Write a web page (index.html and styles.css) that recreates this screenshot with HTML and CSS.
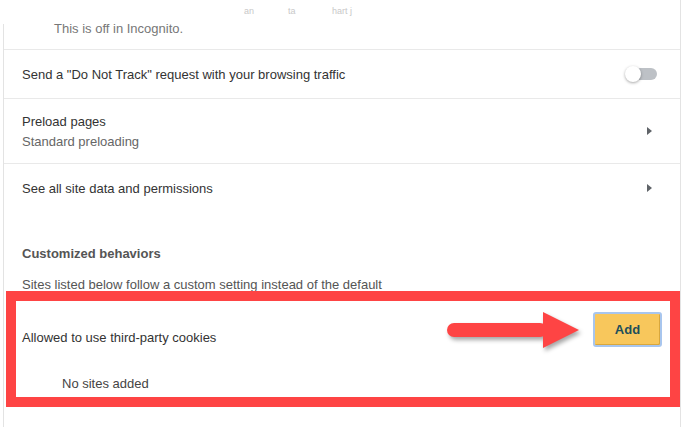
FILE: index.html
```html
<!DOCTYPE html>
<html lang="en">
<head>
    <meta charset="UTF-8">
    <meta name="viewport" content="width=device-width, initial-scale=1.0">
    <title>Cookies and other site data</title>
    <link rel="stylesheet" href="styles.css">
</head>
<body>
    <div class="page">
        <!-- faded remains of the row scrolled out above -->
        <div class="ghost">
            <span class="ghost-a">an</span>
            <span class="ghost-b">ta</span>
            <span class="ghost-c">hart j</span>
        </div>

        <div class="card">
            <div class="row row-note">
                <span class="note">This is off in Incognito.</span>
            </div>

            <div class="row row-line">
                <span class="label">Send a "Do Not Track" request with your browsing traffic</span>
                <span class="toggle"><span class="knob"></span></span>
            </div>

            <div class="row row-line row-tall">
                <div class="stack">
                    <span class="label">Preload pages</span>
                    <span class="sub">Standard preloading</span>
                </div>
                <span class="chevron"></span>
            </div>

            <div class="row row-line">
                <span class="label">See all site data and permissions</span>
                <span class="chevron"></span>
            </div>

            <div class="section">
                <h2 class="section-title">Customized behaviors</h2>
                <p class="section-desc">Sites listed below follow a custom setting instead of the default</p>
            </div>

            <div class="list">
                <div class="list-head">
                    <span class="label">Allowed to use third-party cookies</span>
                    <button class="btn-add">Add</button>
                </div>
                <div class="list-empty">No sites added</div>
            </div>
        </div>

        <!-- annotation drawn over the screenshot -->
        <div class="highlight"></div>
        <svg class="arrow" width="150" height="55" viewBox="0 0 150 55">
            <rect x="7" y="18" width="100" height="14" rx="7" fill="#fe4444"/>
            <polygon points="103,7 139,25 103,43" fill="#fe4444"/>
        </svg>
    </div>
</body>
</html>
```

FILE: styles.css
```css
body {
    margin: 0;
    padding: 0;
    background: #fff;
    font-family: "Segoe UI", "Liberation Sans", Arial, sans-serif;
    font-size: 13px;
    color: #333;
}
.page {
    position: relative;
    width: 681px;
    height: 427px;
    overflow: hidden;
    border-right: 1px solid #e3e3e3;
    box-sizing: border-box;
}
.ghost {
    height: 24px;
    position: relative;
    font-size: 9px;
    color: #c8c8c8;
}
.ghost span {
    position: absolute;
    top: 6px;
}
.ghost-a { left: 244px; }
.ghost-b { left: 288px; }
.ghost-c { left: 332px; }

.card {
    margin-left: 3px;
    border-left: 1px solid #e3e3e3;
    height: 403px;
}
.row {
    display: flex;
    align-items: center;
    justify-content: space-between;
    padding: 0 22px 0 18px;
}
.row-note {
    height: 25px;
    align-items: flex-start;
}
.note {
    color: #777;
    padding-left: 32px;
    margin-top: -3px;
}
.row-line {
    border-top: 1px solid #e9e9e9;
    height: 48px;
}
.row-tall {
    height: 64px;
}
.stack {
    display: flex;
    flex-direction: column;
    gap: 5px;
    margin-top: 0;
}
.sub {
    color: #666;
}
.toggle {
    position: relative;
    width: 24px;
    height: 12px;
    border-radius: 6px;
    background: #bdc1c6;
    margin-right: 1px;
}
.knob {
    position: absolute;
    left: -8px;
    top: -2px;
    width: 16px;
    height: 16px;
    border-radius: 50%;
    background: #fff;
    box-shadow: 0 1px 3px rgba(0, 0, 0, 0.35);
}
.chevron {
    width: 0;
    height: 0;
    border-top: 4px solid transparent;
    border-bottom: 4px solid transparent;
    border-left: 5px solid #5f6368;
    margin-right: 6px;
}
.section {
    padding: 34px 18px 0;
}
.section-title {
    margin: 0;
    font-size: 13px;
    font-weight: 600;
    color: #555;
}
.section-desc {
    margin: 16px 0 0;
    color: #555;
}
.list {
    padding: 14px 18px 0;
}
.list-head {
    display: flex;
    align-items: center;
    justify-content: space-between;
    height: 50px;
}
.list-head .label {
    padding-top: 13px;
}
.btn-add {
    width: 69px;
    height: 35px;
    margin-top: -4px;
    background: #f8c75c;
    border: 2px solid #a8c6ee;
    border-radius: 3px;
    box-shadow: inset -1px -1px 0 #d9a73c;
    font-family: inherit;
    font-size: 13px;
    font-weight: 600;
    color: #1d4f5b;
}
.list-empty {
    padding: 20px 0 0 40px;
    color: #444;
}

.highlight {
    position: absolute;
    left: 6px;
    top: 291px;
    width: 674px;
    height: 116px;
    border: 10px solid #fe4444;
    box-sizing: border-box;
}
.arrow {
    position: absolute;
    left: 440px;
    top: 305px;
    filter: drop-shadow(2px 3px 2px rgba(0, 0, 0, 0.35));
}
```
